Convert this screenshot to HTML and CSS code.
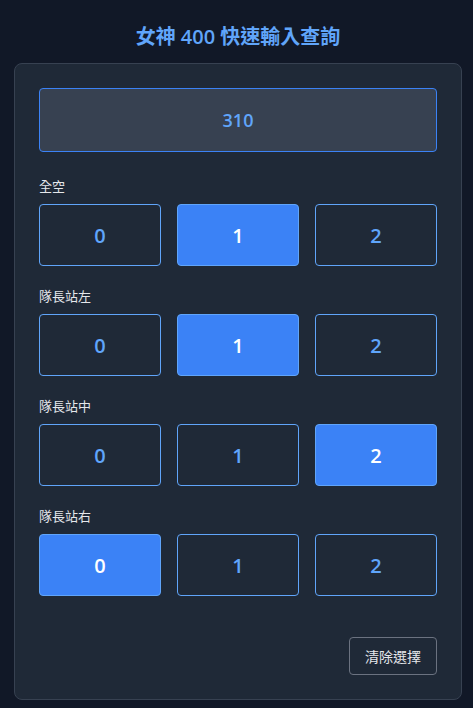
FILE: index.html
```html
<!DOCTYPE html>
<html lang="zh-Hant">
<head>
<meta charset="utf-8">
<link rel="stylesheet" href="styles.css">
</head>
<body>
<main class="page">
  <h1 class="title">女神 400 快速輸入查詢</h1>
  <section class="card">
    <div class="display">310</div>
    <div class="group">
      <div class="label">全空</div>
      <div class="options">
        <button class="opt">0</button>
        <button class="opt active">1</button>
        <button class="opt">2</button>
      </div>
    </div>
    <div class="group">
      <div class="label">隊長站左</div>
      <div class="options">
        <button class="opt">0</button>
        <button class="opt active">1</button>
        <button class="opt">2</button>
      </div>
    </div>
    <div class="group">
      <div class="label">隊長站中</div>
      <div class="options">
        <button class="opt">0</button>
        <button class="opt">1</button>
        <button class="opt active">2</button>
      </div>
    </div>
    <div class="group">
      <div class="label">隊長站右</div>
      <div class="options">
        <button class="opt active">0</button>
        <button class="opt">1</button>
        <button class="opt">2</button>
      </div>
    </div>
    <div class="actions">
      <button class="clear">清除選擇</button>
    </div>
  </section>
</main>
</body>
</html>
```
FILE: styles.css
```css
html, body {
  margin: 0;
  padding: 0;
  background: #111827;
  height: 100%;
}
body {
  font-family: "Open Sans", "Noto Sans", "Noto Sans CJK TC", sans-serif;
  color: #e5e7eb;
}
.page {
  padding: 22px 0 0 14px;
}
.title {
  width: 448px;
  margin: 0 0 11px;
  text-align: center;
  font-size: 20px;
  line-height: 30px;
  font-weight: 600;
  color: #60a5fa;
}
.card {
  width: 448px;
  box-sizing: border-box;
  background: #1f2937;
  border: 1px solid #374151;
  border-radius: 8px;
  padding: 24px;
}
.display {
  height: 64px;
  box-sizing: border-box;
  background: #374151;
  border: 1px solid #3b82f6;
  border-radius: 4px;
  display: flex;
  align-items: center;
  justify-content: center;
  font-size: 18px;
  font-weight: 600;
  color: #60a5fa;
  margin-bottom: 24px;
}
.group {
  margin-bottom: 20px;
}
.label {
  font-size: 13px;
  line-height: 20px;
  color: #e5e7eb;
  margin-bottom: 8px;
}
.options {
  display: grid;
  grid-template-columns: repeat(3, 1fr);
  gap: 16px;
}
.opt {
  height: 62px;
  box-sizing: border-box;
  background: transparent;
  border: 1px solid #60a5fa;
  border-radius: 4px;
  color: #60a5fa;
  font-family: inherit;
  font-size: 20px;
  font-weight: 600;
  padding: 0;
}
.opt.active {
  background: #3b82f6;
  border-color: #60a5fa;
  color: #ffffff;
}
.actions {
  display: flex;
  justify-content: flex-end;
  padding-top: 21px;
}
.clear {
  height: 38px;
  padding: 0 15px;
  background: transparent;
  border: 1px solid #6b7280;
  border-radius: 4px;
  color: #e5e7eb;
  font-family: inherit;
  font-size: 14px;
}
```
